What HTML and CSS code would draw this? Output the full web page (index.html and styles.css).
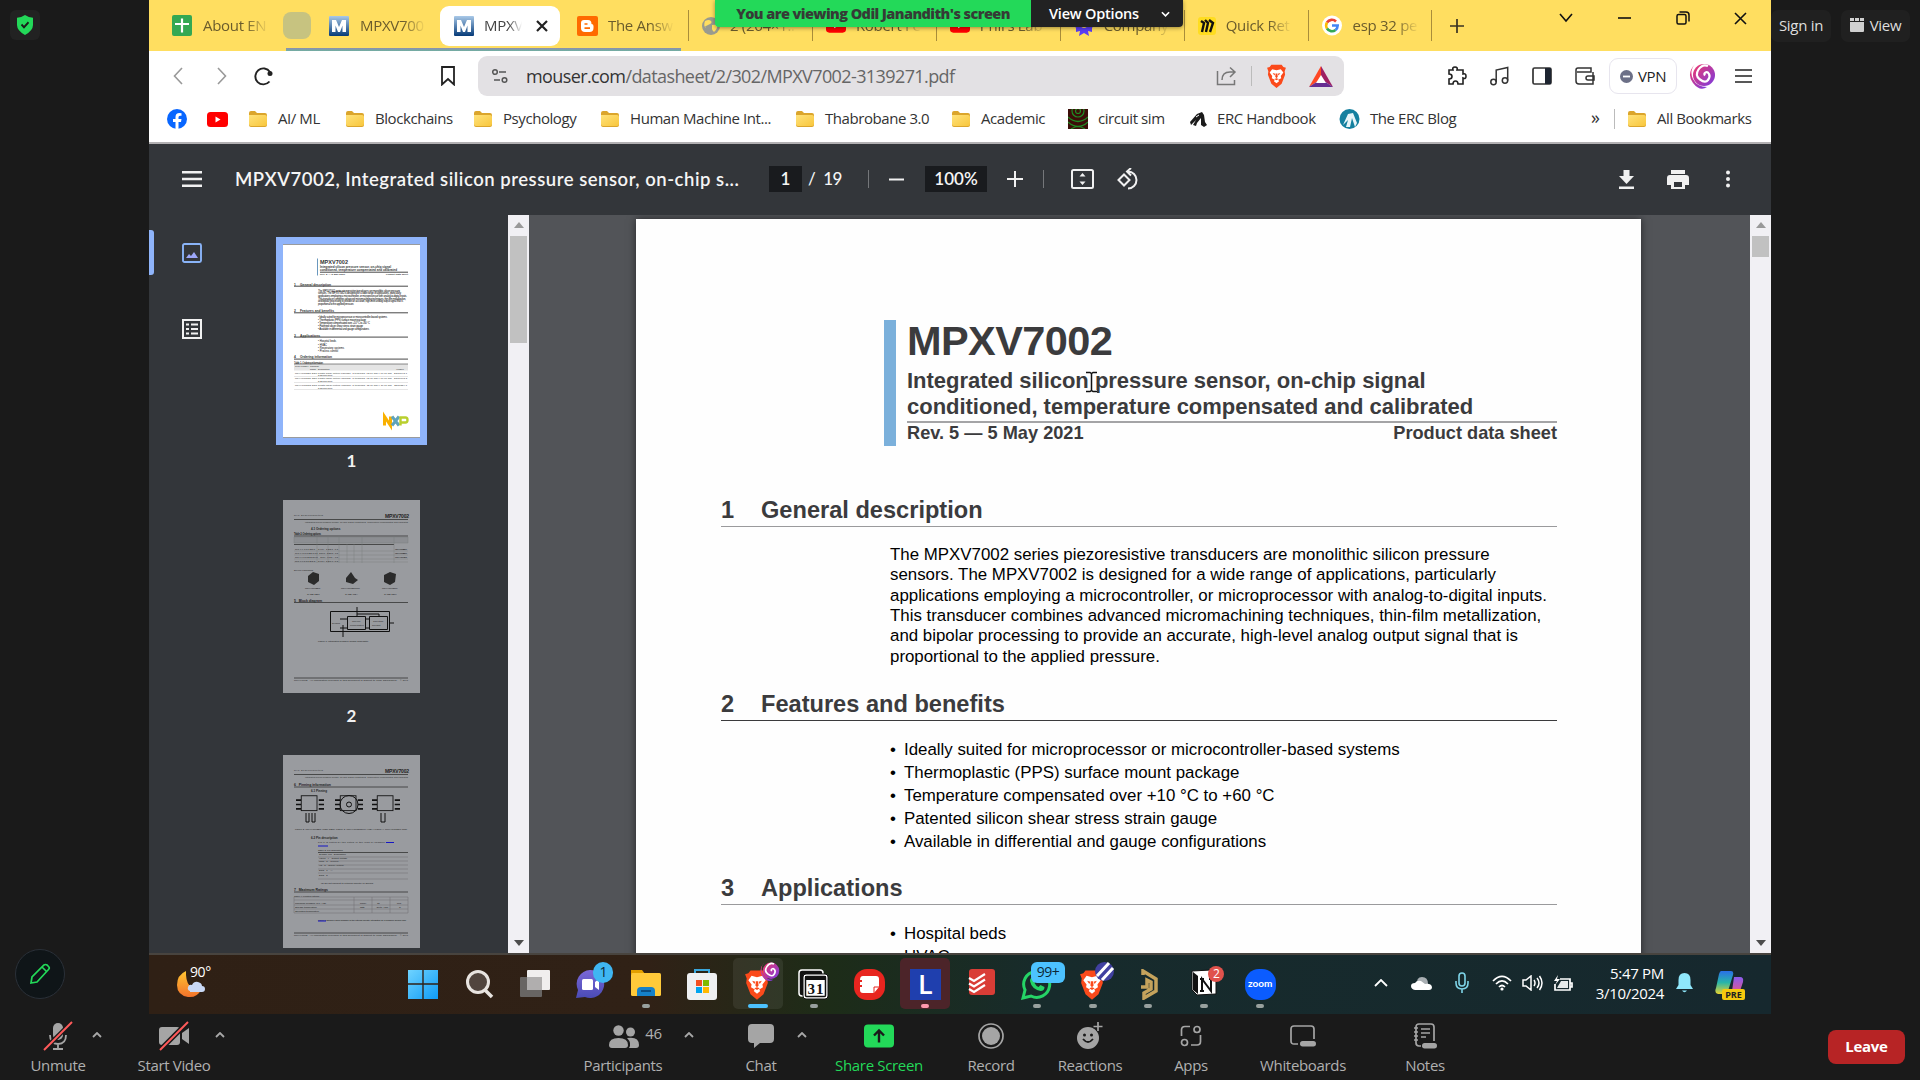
FILE: index.html
```html
<!DOCTYPE html>
<html lang="en">
<head>
<meta charset="utf-8">
<title>Screen share</title>
<link rel="stylesheet" href="styles.css">
</head>
<body>
<svg class="defs" width="0" height="0">
  <defs>
    <linearGradient id="gm" x1="0" y1="0" x2="0" y2="1"><stop offset="0" stop-color="#a9c9e8"/><stop offset="1" stop-color="#053a78"/></linearGradient>
    <linearGradient id="gf" x1="0" y1="0" x2="1" y2="1"><stop offset="0" stop-color="#ffe27a"/><stop offset="1" stop-color="#f8c63c"/></linearGradient>
    <linearGradient id="gs" x1="0" y1="0" x2="1" y2="1"><stop offset="0" stop-color="#f0386b"/><stop offset="1" stop-color="#7a3be0"/></linearGradient>
    <linearGradient id="gw" x1="0" y1="0" x2="1" y2="1"><stop offset="0" stop-color="#6fd3ff"/><stop offset="1" stop-color="#0f9bf5"/></linearGradient>
    <linearGradient id="gp" x1="0" y1="0" x2="0" y2="1"><stop offset="0" stop-color="#7b68d8"/><stop offset="1" stop-color="#4a4bb5"/></linearGradient>
    <linearGradient id="go" x1="0" y1="0" x2="0" y2="1"><stop offset="0" stop-color="#ffc531"/><stop offset="1" stop-color="#f2722b"/></linearGradient>
    <linearGradient id="gc" x1="0" y1="0" x2="0" y2="1"><stop offset="0" stop-color="#2a6fe8"/><stop offset=".5" stop-color="#28b5a8"/><stop offset="1" stop-color="#e8d32e"/></linearGradient>
    <linearGradient id="gd" x1="0" y1="0" x2="0" y2="1"><stop offset="0" stop-color="#8a5cf0"/><stop offset="1" stop-color="#f0567a"/></linearGradient>
    <symbol id="folder" viewBox="0 0 20 18"><path d="M1 3Q1 1 3 1h4l2 2h8q2 0 2 2v10q0 2-2 2H3q-2 0-2-2z" fill="#dba52c"/><path d="M1 5h16q2 0 2 2v7q0 2-2 2H3q-2 0-2-2z" fill="url(#gf)"/></symbol>
    <symbol id="mouser" viewBox="0 0 20 20"><rect width="20" height="20" rx="1" fill="url(#gm)"/><path d="M3 16V4h4l3 7 3-7h4v12h-3.500V9.500L11 16H9L6.500 9.500V16z" fill="#fff"/></symbol>
    <symbol id="yt" viewBox="0 0 21 15"><rect width="21" height="15" rx="3.500" fill="#f00"/><path d="M8.500 4.500v6l5-3z" fill="#fff"/></symbol>
    <symbol id="brave" viewBox="0 0 24 28"><path d="M6 1h12l2 2.500 3 1-1.500 4 .5 4-4 10.500L12 28l-6-5L2 12.500l.5-4L1 4.500l3-1z" fill="#fb4a1b"/><path d="M7 6l5 1.200L17 6l3 4-3 4 .5 2.500-3.500 2 1 1.500-3 2.500-3-2.500 1-1.500-3.500-2L7 14l-3-4z" fill="#fff"/><path d="M7.500 10.500l3 1-1 2zM16.500 10.500l-3 1 1 2zM11 11h2l.5 4-1.500 1.500L10.500 15zM9.500 17.500l2.500-1 2.500 1-2.500 1.500z" fill="#fb4a1b"/></symbol>
    <symbol id="swirl" viewBox="0 0 28 28"><circle cx="16" cy="13" r="11" fill="url(#gs)"/><path d="M17 13.500q-1.500-2 .5-3t3.500 1.500-1 6-8-.5-1.500-10T20 4" fill="none" stroke="#fff" stroke-width="2.200"/><path d="M7 2Q-2 12 5 21t14 4Q9 25 5 17T7 2z" fill="url(#gs)"/></symbol>
    <symbol id="caret" viewBox="0 0 10 6"><path d="M1 5l4-4 4 4" fill="none" stroke="#a8a8a8" stroke-width="1.800"/></symbol>
    <symbol id="chip" viewBox="0 0 34 32"><path d="M1 7h6M1 12h6M1 17h6M27 7h6M27 12h6M27 17h6" stroke="#111" stroke-width="1.800"/><rect x="7" y="2" width="18" height="17" fill="#999b9f" stroke="#111"/></symbol>
  </defs>
</svg>

<div class="meeting">
  <aside class="left">
    <div class="shield"><svg width="16" height="20" viewBox="0 0 16 18" preserveAspectRatio="none"><path d="M8 0q4 2.500 8 2.500V9q0 5-8 9-8-4-8-9V2.500Q4 2.500 8 0z" fill="#23d959"/><path d="M4.500 8.500L7 11l4.500-4.500" fill="none" stroke="#1a1a1a" stroke-width="1.800"/></svg></div>
    <div class="annotate"><svg width="22" height="22" viewBox="0 0 22 22"><path d="M2 20l1-6L15 2q1.500-1 3 0l1.500 1.500q1.500 1.500 0 3L8 19zM13 4l5 5" fill="none" stroke="#23d959" stroke-width="1.700"/></svg></div>
  </aside>

  <main class="share">
    <header class="tabs">
      <div class="tab"><svg width="20" height="21" viewBox="0 0 20 21"><rect width="20" height="21" rx="2" fill="#34a853"/><path d="M10 3.500v14M3 9h14" stroke="#fff" stroke-width="2.200"/></svg><span>About EN</span></div>
      <div class="group"></div>
      <div class="tab"><svg width="20" height="20"><use href="#mouser"/></svg><span>MPXV700</span></div>
      <div class="tab active"><svg width="20" height="20"><use href="#mouser"/></svg><span>MPXV</span><svg class="x" width="12" height="12" viewBox="0 0 12 12"><path d="M1 1l10 10M11 1L1 11" stroke="#222" stroke-width="2.200"/></svg></div>
      <div class="tab blog"><svg width="21" height="20" viewBox="0 0 21 20"><rect width="21" height="20" rx="2" fill="#ff6a00"/><path d="M7 4h4q3.500 0 3.500 4 2 0 2 2v2q0 4-4 4H8q-4 0-4-4V7q0-3 3-3z" fill="#fff"/><path d="M7.500 8h3M7.500 12.200h5.500" stroke="#ff6a00" stroke-width="1.700"/></svg><span>The Answ</span></div>
      <div class="tab sep"><svg width="18" height="18" viewBox="0 0 18 18"><circle cx="9" cy="9" r="9" fill="#9a9b8e"/><path d="M3 4q4-2 6 0t-3 4-2 3q-3-2-1-7zM10 8q4-1 5 1t-3 6q-2-2-2-3t0-4z" fill="#ffde60"/></svg><span>2 (264×1...</span></div>
      <div class="tab sep"><svg width="20" height="15"><use href="#yt"/></svg><span>Robert Fel</span></div>
      <div class="tab sep"><svg width="20" height="15"><use href="#yt"/></svg><span>Phil's Lab</span></div>
      <div class="tab sep"><svg width="20" height="22" viewBox="0 0 20 22"><path d="M10 1l3 2 4 0 1 4 2 3-2 3v4l-4-1 1 5-5-3-5 3 1-5-4 1v-4L0 10l2-3 1-4h4z" fill="#5b3df5"/><circle cx="10" cy="10" r="3" fill="#ffde60"/></svg><span>Company</span></div>
      <div class="tab sep"><svg width="18" height="18" viewBox="0 0 18 18"><rect width="18" height="18" rx="3" fill="#ffdd20"/><path d="M3 4l3 2-2 9M7 3l3 3-2 9M11 3l4 3-3 9" fill="none" stroke="#111" stroke-width="2.400"/></svg><span>Quick Ret</span></div>
      <div class="tab sep"><svg width="20" height="21" viewBox="0 0 20 21"><circle cx="10" cy="10.500" r="10" fill="#fff"/><g fill="none" stroke-width="2.600"><path d="M14 6.500A5.800 5.800 0 0 0 5 7.500" stroke="#ea4335"/><path d="M5 7.500a6 6 0 0 0 0 6" stroke="#fbbc05"/><path d="M5 13.500a5.800 5.800 0 0 0 8.500 1.500" stroke="#34a853"/><path d="M13.500 15a6 6 0 0 0 2.200-4.500H10" stroke="#4285f4"/></g></svg><span>esp 32 pe</span></div>
      <div class="tab sep plus"><svg width="14" height="14" viewBox="0 0 14 14"><path d="M7 0v14M0 7h14" stroke="#3a3322" stroke-width="1.700"/></svg></div>
      <div class="winctl">
        <svg width="14" height="10" viewBox="0 0 14 10"><path d="M1 1l6 7 6-7" fill="none" stroke="#111" stroke-width="1.600"/></svg>
        <svg width="13" height="10" viewBox="0 0 13 10"><path d="M0 5h13" stroke="#111" stroke-width="1.600"/></svg>
        <svg width="14" height="14" viewBox="0 0 14 14"><rect x="1" y="3.500" width="9" height="9.500" rx="1.500" fill="none" stroke="#111" stroke-width="1.500"/><path d="M3.500 1H10q3 0 3 3v6.500" fill="none" stroke="#111" stroke-width="1.500"/></svg>
        <svg width="13" height="13" viewBox="0 0 13 13"><path d="M1 1l11 11M12 1L1 12" stroke="#111" stroke-width="1.600"/></svg>
      </div>
      <i class="underline"></i>
      <div class="banner"><b>You are viewing Odil Janandith's screen</b><div>View Options<svg width="9" height="6" viewBox="0 0 10 6"><path d="M1 1l4 4 4-4" fill="none" stroke="#fff" stroke-width="1.800"/></svg></div></div>
    </header>

    <div class="nav">
      <svg width="10" height="18" viewBox="0 0 10 18"><path d="M9 1L1.500 9 9 17" fill="none" stroke="#999" stroke-width="1.600"/></svg>
      <svg width="10" height="18" viewBox="0 0 10 18"><path d="M1 1l7.500 8L1 17" fill="none" stroke="#999" stroke-width="1.600"/></svg>
      <svg width="20" height="20" viewBox="0 0 20 20"><path d="M16.500 15.500A8 8 0 1 1 17 6" fill="none" stroke="#222" stroke-width="1.900"/><circle cx="17" cy="7.500" r="2.500" fill="#222"/></svg>
      <svg width="14" height="20" viewBox="0 0 14 20"><path d="M1 1h12v17.500L7 13l-6 5.500z" fill="none" stroke="#222" stroke-width="1.800"/></svg>
      <div class="url">
        <svg width="16" height="16" viewBox="0 0 16 16"><g fill="none" stroke="#555" stroke-width="1.500"><circle cx="3" cy="4" r="2.300"/><path d="M7 4h7M2 12h6"/><circle cx="12.500" cy="12" r="2.300"/></g></svg>
        <span><b>mouser.com</b>/datasheet/2/302/MPXV7002-3139271.pdf</span>
        <svg width="21" height="20" viewBox="0 0 21 20"><path d="M1.500 5v13.500h17V14M6 14q0-8 8-8h4M14 1.500L19 6l-5 5" fill="none" stroke="#777" stroke-width="1.500"/></svg>
        <i></i>
        <svg width="21" height="24"><use href="#brave"/></svg>
        <svg width="24" height="21" viewBox="0 0 24 21"><path d="M12 0L0 21l12-8z" fill="#ff4724"/><path d="M12 0l12 21-12-8z" fill="#9e1f63"/><path d="M0 21h24l-12-8z" fill="#662d91"/><path d="M12 9l5 8H7z" fill="#fff"/></svg>
      </div>
      <div class="tools">
        <svg width="20" height="20" viewBox="0 0 20 20"><path d="M2 4h4q-1-3 2-3t2 3h6v4q3-1 3 2.200T16 12v6h-5q0-3-2.500-3T6 18H2v-5q3 0 3-2.500T2 8z" fill="none" stroke="#222" stroke-width="1.600"/></svg>
        <svg width="19" height="20" viewBox="0 0 19 20"><g fill="none" stroke="#333" stroke-width="1.500"><circle cx="3.500" cy="16" r="2.700"/><circle cx="15" cy="14.500" r="2.700"/><path d="M6.200 16V4l11.500-2.500v13"/></g></svg>
        <svg width="20" height="18" viewBox="0 0 20 18"><rect x="1" y="1" width="18" height="16" rx="1.500" fill="none" stroke="#333" stroke-width="1.700"/><path d="M13 1h6v16h-6z" fill="#1d2430"/></svg>
        <svg width="20" height="18" viewBox="0 0 20 18"><path d="M2 5h14V1H3Q1 1 1 3v11q0 3 3 3h14V5M19 9h-6q-2 0-2 2t2 2h6z" fill="none" stroke="#333" stroke-width="1.500"/></svg>
        <div class="vpn"><svg width="13" height="13" viewBox="0 0 13 13"><circle cx="6.500" cy="6.500" r="6.500" fill="#6c7087"/><path d="M3 6.500h7" stroke="#fff" stroke-width="1.800"/></svg><span>VPN</span></div>
        <svg width="28" height="28"><use href="#swirl"/></svg>
        <svg width="17" height="14" viewBox="0 0 17 14"><path d="M0 1h17M0 7h17M0 13h17" stroke="#222" stroke-width="1.700"/></svg>
      </div>
    </div>

    <div class="marks">
      <a><svg width="20" height="20" viewBox="0 0 20 20"><circle cx="10" cy="10" r="10" fill="#0866ff"/><path d="M8.500 20v-7H6v-3h2.500V8q0-4 4-4l2 .2v2.600H13q-1.500 0-1.500 1.500V10h3l-.5 3h-2.500v7z" fill="#fff"/></svg></a>
      <a><svg width="21" height="15"><use href="#yt"/></svg></a>
      <a><svg width="20" height="18"><use href="#folder"/></svg><span>AI/ ML</span></a>
      <a><svg width="20" height="18"><use href="#folder"/></svg><span>Blockchains</span></a>
      <a><svg width="20" height="18"><use href="#folder"/></svg><span>Psychology</span></a>
      <a><svg width="20" height="18"><use href="#folder"/></svg><span>Human Machine Int...</span></a>
      <a><svg width="20" height="18"><use href="#folder"/></svg><span>Thabrobane 3.0</span></a>
      <a><svg width="20" height="18"><use href="#folder"/></svg><span>Academic</span></a>
      <a><svg width="20" height="20" viewBox="0 0 20 20"><path fill="#3c0d08" d="M0 0h20v20H0z"/><g fill="none" stroke="#1f8c24" stroke-width="1.200"><circle cx="10" cy="2" r="2.500"/><circle cx="10" cy="2" r="6"/><path d="M0 8q10 9 20 0M0 13q10 9 20 0M3 20q7-5 14 0"/></g></svg><span>circuit sim</span></a>
      <a><svg width="18" height="17" viewBox="0 0 18 17"><path d="M1 11L8 3l5-2 2 3 1 7 2 3-3 2-3-2V7l-4 5-1 3-3-1 3-5-5 5z" fill="#1b1b1b"/><path d="M7 6l3-2" stroke="#fff"/></svg><span>ERC Handbook</span></a>
      <a><svg width="21" height="20" viewBox="0 0 21 20"><circle cx="10.500" cy="10" r="10" fill="#14809f"/><path d="M4 16l5-11 5-1 4 10-2 4-3-9-2 9-4 0 2-7z" fill="#e8f5f8"/></svg><span>The ERC Blog</span></a>
      <em>»</em><i></i>
      <a><svg width="20" height="18"><use href="#folder"/></svg><span>All Bookmarks</span></a>
    </div>

    <div class="pdfbar">
      <svg width="20" height="16" viewBox="0 0 20 16"><path d="M0 1.200h20M0 8h20M0 14.800h20" stroke="#f1f1f1" stroke-width="2.400"/></svg>
      <strong>MPXV7002, Integrated silicon pressure sensor, on-chip s...</strong>
      <span class="box pg">1</span><span class="total">/&nbsp; 19</span><i></i>
      <svg width="15" height="15" viewBox="0 0 15 15"><path d="M0 7.500h15" stroke="#f1f1f1" stroke-width="2"/></svg>
      <span class="box zm">100%</span>
      <svg width="16" height="16" viewBox="0 0 16 16"><path d="M0 8h16M8 0v16" stroke="#f1f1f1" stroke-width="2"/></svg><i></i>
      <svg width="23" height="20" viewBox="0 0 23 20"><rect x="1" y="1" width="21" height="18" rx="1.500" fill="none" stroke="#f1f1f1" stroke-width="2"/><path d="M8.500 7.500l3-3.500 3 3.500zM8.500 12.500l3 3.500 3-3.500z" fill="#f1f1f1"/></svg>
      <svg width="22" height="22" viewBox="0 0 22 22"><path d="M1.500 12L7 6.500l5.500 5.500L7 17.500zM11 3.500a8.500 8.500 0 1 1 0 17M14 0l-4 3.500 4 4" fill="none" stroke="#f1f1f1" stroke-width="2"/></svg>
      <div class="actions">
        <svg width="15" height="19" viewBox="0 0 15 19"><path d="M4.500 0h6v6H15l-7.500 8L0 6h4.500zM0 16.500h15V19H0z" fill="#f1f1f1"/></svg>
        <svg width="22" height="19" viewBox="0 0 22 19"><path d="M4 0h14v4H4zM3 5h16q3 0 3 3v7h-4v4H4v-4H0V8q0-3 3-3zm4 7v5h8v-5z" fill="#f1f1f1"/></svg>
        <svg width="4" height="18" viewBox="0 0 4 18"><g fill="#f1f1f1"><circle cx="2" cy="2.500" r="2"/><circle cx="2" cy="9" r="2"/><circle cx="2" cy="15.500" r="2"/></g></svg>
      </div>
    </div>

    <div class="viewer">
      <div class="rail">
        <svg width="20" height="20" viewBox="0 0 20 20"><rect x="1" y="1" width="18" height="18" rx="1.500" fill="none" stroke="#8ab4f8" stroke-width="1.900"/><path d="M4 15l3-4 2 2 3-4 4 6z" fill="#9da7fa"/></svg>
        <svg width="20" height="20" viewBox="0 0 20 20"><path d="M1 1h18v18H1z" fill="none" stroke="#f1f1f1" stroke-width="2"/><path d="M4 5.500h3M9 5.500h7M4 10h3M9 10h7M4 14.500h3M9 14.500h7" stroke="#f1f1f1" stroke-width="2.200"/></svg>
      </div>
      <div class="thumbs">
        <div class="thumb sel"><svg width="137" height="194" viewBox="0 0 137 193">
          <path fill="#fff" d="M0 0h137v193H0z"/><path d="M34.500 14v17" stroke="#6a98bd"/>
          <g font-weight="700" fill="#333"><text x="37" y="19" font-size="5.500" textLength="28">MPXV7002</text><text x="37" y="23.500" font-size="3" textLength="71">Integrated silicon pressure sensor, on-chip signal</text><text x="37" y="26.800" font-size="3" textLength="77">conditioned, temperature compensated and calibrated</text><text x="37" y="30.500" font-size="2.400" textLength="25">Rev. 5 — 5 May 2021</text><text x="103" y="30.500" font-size="2.400" textLength="22">Product data sheet</text>
          <g font-size="3.300"><text x="11" y="41">1</text><text x="17" y="41" textLength="31">General description</text><text x="11" y="67">2</text><text x="17" y="67" textLength="34">Features and benefits</text><text x="11" y="92">3</text><text x="17" y="92" textLength="20">Applications</text><text x="11" y="113.500">4</text><text x="17" y="113.500" textLength="32">Ordering information</text></g></g>
          <path d="M37 27.700h88M11 41.700h114M11 68.300h114M11 92.600h114M11 114.600h114M11 119.700h114" stroke="#333" stroke-width=".9"/>
          <g font-size="2.700" fill="#000"><text x="35" y="47.200" textLength="82">The MPXV7002 series piezoresistive transducers are monolithic silicon pressure</text><text x="35" y="49.800" textLength="83">sensors. The MPXV7002 is designed for a wide range of applications, particularly</text><text x="35" y="52.500" textLength="89">applications employing a microcontroller, or microprocessor with analog-to-digital inputs.</text><text x="35" y="55.200" textLength="88">This transducer combines advanced micromachining techniques, thin-film metallization,</text><text x="35" y="57.800" textLength="85">and bipolar processing to provide an accurate, high-level analog output signal that is</text><text x="35" y="60.500" textLength="36">proportional to the applied pressure.</text>
          <text x="35" y="73" textLength="69">• Ideally suited for microprocessor or microcontroller-based systems</text><text x="35" y="76" textLength="48">• Thermoplastic (PPS) surface mount package</text><text x="35" y="79" textLength="52">• Temperature compensated over +10 °C to +60 °C</text><text x="35" y="82" textLength="45">• Patented silicon shear stress strain gauge</text><text x="35" y="85" textLength="51">• Available in differential and gauge configurations</text><text x="35" y="97.500">• Hospital beds</text><text x="35" y="101">• HVAC</text><text x="35" y="104.200">• Respiratory systems</text><text x="35" y="107">• Process control</text><text x="11" y="119" textLength="29">Table 1. Ordering information</text></g>
          <path fill="#e4e4e4" d="M11 120h114v6H11z"/><path d="M11 132h114M11 138h114M11 145h114" stroke="#ccc" stroke-width=".5"/>
          <g font-size="2.300" fill="#222"><text x="12" y="122.500">Type number</text><text x="27" y="122.500">Package</text><text x="27" y="125.500">Name &#160; Description</text><text x="113" y="125.500">Version</text><text x="12" y="129" textLength="112">MPXV7002DP SOT Plastic small outline package, 8 terminals, 12.06 mm x 10.67 mm &#160; SOT1693-1</text><text x="35" y="131.500">3.38 mm body</text><text x="12" y="134.800" textLength="112">MPXV7002GP SOT Plastic small outline package, 8 terminals, 12.06 mm x 10.67 mm &#160; SOT1693-3</text><text x="35" y="137.300">3.38 mm body</text><text x="12" y="141.300" textLength="112">MPXV7002GC SOT Plastic small outline package, 8 terminals, 12.06 mm x 10.67 mm &#160; SOT1854-1</text><text x="35" y="144">3.38 mm body</text></g>
          <path d="M101.500 181v-9l6 9v-9" fill="none" stroke="#f9b000" stroke-width="3"/><path d="M109 172l7 9M116 172l-7 9" stroke="#5fa3bb" stroke-width="3"/><path d="M117.500 181v-8h5q2 0 2 2.500t-2 2.500h-5" fill="none" stroke="#b9cf2e" stroke-width="2.400"/>
        </svg></div>
        <b>1</b>
        <div class="thumb"><svg width="137" height="193" viewBox="0 0 137 193">
          <path fill="#999b9f" d="M0 0h137v193H0z"/>
          <g fill="#222"><text x="11" y="16" font-size="2.300" textLength="29">NXP Semiconductors</text><text x="102" y="18" font-size="5" font-weight="700" textLength="24">MPXV7002</text><text x="22" y="22.500" font-size="2" textLength="103">Integrated silicon pressure sensor, on-chip signal conditioned, temperature compensated and calibrated</text><text x="28" y="30" font-size="3" font-weight="700">4.1 Ordering options</text><text x="11" y="35" font-size="2.600" font-weight="700" textLength="27">Table 2. Ordering options</text><text x="11" y="71" font-size="2.500">Device packages</text><text x="11" y="102" font-size="3.500" font-weight="700" textLength="28">5 &#160; Block diagram</text></g>
          <path d="M11 19.500h114M11 36h114M11 44.500h100M11 102.500h114M11 178h114" stroke="#333" stroke-width=".8"/>
          <path d="M11 37h114v6H11zM11 51h114M11 55h114M11 59h114M11 62h114M34 36v27M45 36v27M56 36v27M64 44v19M71 44v19M79 36v27M111 36v27" fill="#8c8e92" stroke="#77797c" stroke-width=".4"/>
          <g font-size="2.400" fill="#111"><text x="12" y="49.500" textLength="43">MPXV7002DP &#160;Tray 1351-01</text><text x="12" y="53.500" textLength="43">MPXV7002DPT1 Tape 1351-01</text><text x="12" y="58" textLength="43">MPXV7002GC6U &#160;Rail 482A-01</text><text x="12" y="61.500" textLength="43">MPXV7002GP &#160;Tray 1369-01</text><text x="112" y="49.500" textLength="12">MPXV7002DP</text><text x="112" y="53.500" textLength="12">MPXV7002DP</text><text x="112" y="58" textLength="12">MPXV7002G</text><text x="22" y="89">MPXV7002DP</text><text x="58" y="89">MPXV7002GC6U</text><text x="99" y="89">MPXV7002GP</text><text x="24" y="95">CASE 1351</text><text x="62" y="95">CASE 482A</text><text x="101" y="95">CASE 1369</text><text x="35" y="141.500">Figure 1. Integrated pressure sensor schematic</text><text x="11" y="180.500" textLength="114">MPXV7002 &#160; All information provided in this document is subject to legal disclaimers. &#160; © NXP</text></g>
          <path d="M25 76l5-4 6 2v7l-5 4-6-3zM63 78l5-6 4 6 3 2-5 4-7-2zM101 75l6-3 6 2-1 8-5 3-6-3z" fill="#2b2b2b"/>
          <g fill="none" stroke="#111"><path d="M47.500 111.500h59v20h-59zM74 107v9M74 114h22v3M57 119h8M57 128h8M60 125v12M107 123h4"/><path d="M64.500 116.500h18v13h-18zM86.500 116.500h18v13h-18zM83 119h4M83 128h4"/></g>
          <g font-size="2.200" fill="#222"><text x="69" y="122">Thin film</text><text x="67" y="126">compensation</text><text x="90" y="122">Gain stage</text><text x="89" y="126">and shift</text><text x="49" y="124">Sensing</text></g>
        </svg></div>
        <b>2</b>
        <div class="thumb"><svg width="137" height="193" viewBox="0 0 137 193">
          <path fill="#999b9f" d="M0 0h137v193H0z"/>
          <g fill="#222"><text x="11" y="16" font-size="2.300" textLength="29">NXP Semiconductors</text><text x="102" y="18" font-size="5" font-weight="700" textLength="24">MPXV7002</text><text x="22" y="22.500" font-size="2" textLength="103">Integrated silicon pressure sensor, on-chip signal conditioned, temperature compensated and calibrated</text><text x="11" y="30.500" font-size="3.500" font-weight="700" textLength="37">6 &#160; Pinning information</text><text x="28" y="37" font-size="3" font-weight="700">6.1 Pinning</text><text x="28" y="84" font-size="3" font-weight="700">6.2 Pin description</text><text x="11" y="136" font-size="3.500" font-weight="700" textLength="34">7 &#160; Maximum Ratings</text></g>
          <path d="M11 19.500h114M11 32h114M11 137h114M35 97.500h90M11 178h114" stroke="#333" stroke-width=".8"/>
          <use href="#chip" x="12" y="39" width="30" height="28"/><use href="#chip" x="51" y="39" width="30" height="28"/><use href="#chip" x="88" y="39" width="30" height="28"/>
          <g fill="none" stroke="#111"><circle cx="66" cy="49.500" r="9"/><circle cx="66" cy="49.500" r="2.500"/><path d="M23 58v9h3v-9M29 58v9h3v-9M98 58v9h4v-9"/></g>
          <g font-size="2.400" fill="#111"><text x="12" y="75" textLength="112">Figure 2. MPXV7002DP (case 1351) Figure 3. MPXV7002GC6U (482A) Figure 4. MPXV7002GP case</text><text x="35" y="88" textLength="67">Pin 1 is noted by the notch in the lead or chamfer</text><text x="35" y="96">Table 3. Pin description</text><text x="36" y="100">Symbol &#160;Pin &#160; Description</text><text x="36" y="104">VOUT &#160; 4 &#160; &#160;Output voltage</text><text x="36" y="107">GND &#160; 3 &#160; &#160;Ground</text><text x="36" y="111">VS &#160; 2 &#160; &#160;Supply voltage</text><text x="36" y="116">DNC &#160; 1 &#160; &#160;—</text><text x="36" y="121">DNC &#160; 5</text><text x="38" y="129" textLength="52">[1] Do not connect to external circuitry or ground</text><text x="11" y="141.500">Table 4. Limiting ratings</text><text x="12" y="149">Maximum pressure (P1 &gt; P2)</text><text x="12" y="153">Storage temperature</text><text x="12" y="157">Operating temperature</text><text x="77" y="149">Pmax</text><text x="94" y="149">75</text><text x="114" y="149">kPa</text><text x="77" y="153">Tstg</text><text x="93" y="153">-30 to +100</text><text x="115" y="153">°C</text><text x="35" y="165.500" textLength="88">Figure 5 shows a block diagram of the internal circuitry integrated on a pressure sensor chip</text><text x="11" y="180.500" textLength="114">MPXV7002 &#160; All information provided in this document is subject to legal disclaimers. &#160; © NXP</text></g>
          <path d="M35 102h90M35 106h90M35 110h90M35 114h90M35 118h90M35 124h90M11 142h114v16H11zM71 142v16M89 142v16M107 142v16M11 145h114M11 150h114M11 154h114" fill="none" stroke="#6c6e72" stroke-width=".5"/>
          <path d="M103 87.500h8M35 91h10M35 166h8" stroke="#1616c4" stroke-width="1.200"/>
        </svg></div>
      </div>
      <div class="sbar a"><i class="up"></i><u></u><i class="dn"></i></div>
      <div class="canvas">
        <article class="page">
          <div class="title">
            <h1>MPXV7002</h1>
            <h2>Integrated silicon pressure sensor, on-chip signal</h2>
            <h2 class="t2">conditioned, temperature compensated and calibrated</h2>
            <div class="rev"><span>Rev. 5 — 5 May 2021</span><span>Product data sheet</span></div>
          </div>
          <h3 class="s1"><span>1</span>General description</h3>
          <p>The MPXV7002 series piezoresistive transducers are monolithic silicon pressure<br>sensors. The MPXV7002 is designed for a wide range of applications, particularly<br>applications employing a microcontroller, or microprocessor with analog-to-digital inputs.<br>This transducer combines advanced micromachining techniques, thin-film metallization,<br>and bipolar processing to provide an accurate, high-level analog output signal that is<br>proportional to the applied pressure.</p>
          <h3 class="s2"><span>2</span>Features and benefits</h3>
          <ul><li>Ideally suited for microprocessor or microcontroller-based systems</li><li>Thermoplastic (PPS) surface mount package</li><li>Temperature compensated over +10 °C to +60 °C</li><li>Patented silicon shear stress strain gauge</li><li>Available in differential and gauge configurations</li></ul>
          <h3 class="s3"><span>3</span>Applications</h3>
          <ul><li>Hospital beds</li><li>HVAC</li></ul>
        </article>
        <svg class="cursor" width="13" height="22" viewBox="0 0 13 22"><path d="M1 1.500h4l1.500 1L8 1.500h4M1 20.500h4l1.500-1 1.500 1h4M6.500 2v18" fill="none" stroke="#fff" stroke-width="3"/><path d="M1 1.500h4l1.500 1L8 1.500h4M1 20.500h4l1.500-1 1.500 1h4M6.500 2v18" fill="none" stroke="#111" stroke-width="1.500"/></svg>
      </div>
      <div class="sbar b"><i class="up"></i><u></u><i class="dn"></i></div>
    </div>

    <footer class="taskbar">
      <div class="weather"><svg width="30" height="28" viewBox="0 0 30 28"><path d="M9 1Q0 5 0 15t11 12q9 1 13-7Q8 20 9 1z" fill="url(#go)"/><path d="M13 21q-3-1-2-4t4-2q2-4 6-3t4 4q3 0 3 3t-3 3H13z" fill="#c9d8f5"/></svg><span>90°</span></div>
      <div class="apps">
        <div><svg width="30" height="30" viewBox="0 0 30 30"><path d="M0 1h14.300v13.300H0zM15.700 1H30v13.300H15.700zM0 15.700h14.300V30H0zM15.700 15.700H30V30H15.700z" fill="url(#gw)"/></svg></div>
        <div><svg width="30" height="30" viewBox="0 0 30 30"><circle cx="14" cy="13" r="10.500" fill="#51453e" stroke="#e8e4e0" stroke-width="3"/><path d="M21 21l7 7" stroke="#e8e4e0" stroke-width="3.500"/></svg></div>
        <div><svg width="30" height="30" viewBox="0 0 30 30"><rect x="7" y="1" width="23" height="20" rx="1" fill="#f0eeee"/><rect y="8" width="22" height="20" rx="1" fill="#777" fill-opacity=".8"/><path d="M7 8h15v13H7z" fill="#b0aeae"/></svg></div>
        <div><svg width="30" height="30" viewBox="0 0 30 30"><path d="M15 1a14 14 0 1 1-5 27l-9 1 2-8A14 14 0 0 1 15 1z" fill="url(#gp)"/><rect x="7" y="10" width="11" height="11" rx="1.500" fill="#fff"/><path d="M20 13l4-3v11l-4-3z" fill="#fff"/></svg><em class="one">1</em></div>
        <div class="run"><svg width="32" height="28" viewBox="0 0 32 28"><path d="M1 1h11l3 4H1z" fill="#e3a000"/><rect x="1" y="4" width="30" height="23" rx="1.500" fill="#ffca3a"/><path d="M7 27v-5q0-4 4-4h10q4 0 4 4v5z" fill="#1581c9"/><path d="M11 22h10" stroke="#0b4f85" stroke-width="2"/></svg></div>
        <div><svg width="30" height="31" viewBox="0 0 30 31"><path d="M8 6V1h14v5" fill="none" stroke="#3aa7dc" stroke-width="2"/><rect y="4" width="30" height="27" rx="3" fill="#eef0f2"/><path d="M9 11h6v6H9z" fill="#f25022"/><path d="M16 11h6v6h-6z" fill="#7fba00"/><path d="M9 18h6v6H9z" fill="#00a4ef"/><path d="M16 18h6v6h-6z" fill="#ffb900"/></svg></div>
        <div class="cur"><svg width="26" height="31"><use href="#brave"/></svg><svg class="ov" width="21" height="21"><use href="#swirl"/></svg></div>
        <div class="run"><svg width="31" height="31" viewBox="0 0 31 31"><rect x="1" y="1" width="24" height="26" rx="3" fill="#111" stroke="#fff" stroke-width="1.500"/><rect x="5" y="5" width="25" height="25" rx="3" fill="#fff" stroke="#111"/><rect x="7.500" y="7.500" width="20" height="20" rx="1" fill="none" stroke="#111" stroke-width="1.500"/><path d="M7 7h21v4H7z" fill="#111"/><text x="9.500" y="25" font-size="15" font-weight="700" font-family="Liberation Serif" fill="#111" textLength="16">31</text></svg></div>
        <div><svg width="31" height="31" viewBox="0 0 31 31"><rect width="31" height="31" rx="13" fill="#e8251f"/><path d="M9 7h13q3 0 3 3v8l-5 6H9q-3 0-3-3v-3h2v-2H6v-3h2v-2H6q0-4 3-4z" fill="#fff"/><path d="M20 24v-6h5" fill="none" stroke="#e8251f"/></svg></div>
        <div class="run lap"><span>L</span></div>
        <div><svg width="27" height="26" viewBox="0 0 27 26"><rect x="1" width="26" height="26" rx="3" fill="#d93d36"/><path d="M1 9l5 3 11-7M1 14.500l5 3 11-7M1 20l5 3 11-7" fill="none" stroke="#fff" stroke-width="2.200"/></svg></div>
        <div class="run"><svg width="31" height="31" viewBox="0 0 31 31"><path d="M2 29l2-8A13 13 0 1 1 10 27z" fill="none" stroke="#25d366" stroke-width="3"/><path d="M10 9l3-1 2 4-1.500 2q1.500 3 4 4l2-2 4 2q0 4-4 4-9-2-10.500-10 0-2 1-3z" fill="#25d366"/></svg><em class="many">99+</em></div>
        <div class="run"><svg class="b2" width="26" height="31"><use href="#brave"/></svg><svg class="ov" width="21" height="21" viewBox="0 0 21 21"><circle cx="10.500" cy="10.500" r="9.500" fill="#4040a0"/><path d="M3 15L15 2M8 19L19 7" stroke="#fff" stroke-width="3"/></svg></div>
        <div class="run"><svg width="20" height="31" viewBox="0 0 20 31"><path d="M5 6V2l13 8v12L6 29v-5l7-4v-7l-4-2v7H3" fill="none" stroke="#c5a35c" stroke-width="3.500"/></svg></div>
        <div class="run"><svg width="26" height="27" viewBox="0 0 26 27"><path d="M1 2l19-1 5 4v20l-19 1-5-5z" fill="#fff" stroke="#111"/><path d="M2 3l5 4v18l-5-4z" fill="#111"/><path d="M11 22V10l9 12V10M9 10h4M18 10h4M9 22h4" fill="none" stroke="#111" stroke-width="2"/></svg><em class="two">2</em></div>
        <div class="run"><span class="zoom">zoom</span></div>
      </div>
      <div class="tray">
        <svg width="14" height="8" viewBox="0 0 14 8"><path d="M1 7l6-6 6 6" fill="none" stroke="#fff" stroke-width="1.800"/></svg>
        <svg width="21" height="14" viewBox="0 0 21 14"><path d="M6 9Q5 1 11 1t6 7z" fill="#a9afb3"/><path d="M4 14q-4-1-4-4t4-3q2-3 6-2l4 3q6-1 7 3 0 3-3 3z" fill="#fff"/></svg>
        <svg width="14" height="22" viewBox="0 0 14 22"><path d="M7 1q3 0 3 3v7q0 3-3 3t-3-3V4q0-3 3-3zM1 9v2q0 6 6 6t6-6V9M7 17v4" fill="none" stroke="#7ed4e8" stroke-width="1.600"/></svg>
        <svg width="20" height="16" viewBox="0 0 20 16"><g fill="none" stroke="#fff" stroke-width="1.700"><path d="M1 6q9-9 18 0M4 9q6-6 12 0M7 12q3-3 6 0"/></g><circle cx="10" cy="14" r="1.600" fill="#fff"/></svg>
        <svg width="21" height="16" viewBox="0 0 21 16"><path d="M1 5h3l5-4v14l-5-4H1zM12 5q2 3 0 6M15 3q4 5 0 10M17.500 1q5 7 0 14" fill="none" stroke="#fff" stroke-width="1.500"/></svg>
        <svg width="20" height="17" viewBox="0 0 20 17"><path d="M7 4h10v11H2V9M17 8h2v4h-2" fill="none" stroke="#fff" stroke-width="1.700"/><path d="M8 6h7v7H4z" fill="#e6eaea"/><path d="M5 0L1 6h3L2 10l5-6H4z" fill="#fff"/></svg>
        <div class="clock"><span>5:47 PM</span><span>3/10/2024</span></div>
        <svg width="17" height="20" viewBox="0 0 17 20"><path d="M8.500 0q6 0 6 7v5l2.500 4H0l2.500-4V7q0-7 6-7zM6 17.500h5q-2.500 3.500-5 0z" fill="#8fe7fb"/></svg>
        <div class="copilot"><svg width="30" height="27" viewBox="0 0 30 27"><path d="M6 1h10q3 0 2 4l-5 16q-1 3-5 3H3q-4-1-2-6L4 4q1-3 2-3z" fill="url(#gc)"/><path d="M19 7h6q4 0 3 5l-3 9q-1 4-5 4h-7q3 0 4-4z" fill="url(#gd)"/></svg><em>PRE</em></div>
      </div>
    </footer>
  </main>

  <aside class="right"><span>Sign in</span><span><svg width="14" height="14" viewBox="0 0 14 14"><path d="M0 0h4v3H0zM5 0h4v3H5zM10 0h4v3h-4zM0 4h14v9q0 1-1 1H1q-1 0-1-1z" fill="#d0d0d0"/></svg>View</span></aside>
</div>

<div class="controls">
  <div class="c mute"><svg width="30" height="30" viewBox="0 0 30 30"><rect x="10" y="2" width="10" height="17" rx="5" fill="#a5a5a5"/><path d="M7 14q0 9 8 9t8-9M15 23v5M10 28h10" fill="none" stroke="#a5a5a5" stroke-width="1.800"/><path d="M1 29L29 1" stroke="#1a1a1a" stroke-width="4.500"/><path d="M1 29L29 1" stroke="#ff5a5a" stroke-width="2"/></svg><span>Unmute</span></div>
  <div class="c video"><svg width="32" height="30" viewBox="0 0 32 30"><rect x="1" y="6" width="21" height="18" rx="3" fill="#a5a5a5"/><path d="M24 12l7-5v16l-7-5z" fill="#a5a5a5"/><path d="M2 29L30 1" stroke="#1a1a1a" stroke-width="5"/><path d="M2 29L30 1" stroke="#ff5a5a" stroke-width="2"/></svg><span>Start Video</span></div>
  <div class="c people"><div><svg width="30" height="23" viewBox="0 0 30 23"><g fill="#a5a5a5"><circle cx="9.500" cy="5.500" r="5.200"/><circle cx="21.500" cy="7" r="4.500"/><path d="M0 20q0-7 9.500-7t9.500 7q0 3-3 3H3q-3 0-3-3zM18 13q12-2 12 7 0 3-3 3h-7q3-5-2-10z"/></g></svg><small>46</small></div><span>Participants</span></div>
  <div class="c chat"><svg width="26" height="24" viewBox="0 0 26 24"><path d="M4 0h18q4 0 4 4v11q0 4-4 4H12l-6 5v-5H4q-4 0-4-4V4q0-4 4-4z" fill="#a5a5a5"/></svg><span>Chat</span></div>
  <div class="c ss"><svg width="30" height="23" viewBox="0 0 30 23"><rect width="30" height="23" rx="4" fill="#23d959"/><path d="M15 18V6M10 11l5-5 5 5" fill="none" stroke="#1a1a1a" stroke-width="2.400"/></svg><span>Share Screen</span></div>
  <div class="c rec"><svg width="26" height="26" viewBox="0 0 26 26"><circle cx="13" cy="13" r="12" fill="none" stroke="#a5a5a5" stroke-width="1.700"/><circle cx="13" cy="13" r="9" fill="#a5a5a5"/></svg><span>Record</span></div>
  <div class="c rea"><svg width="28" height="28" viewBox="0 0 28 28"><circle cx="12" cy="16" r="11" fill="#a5a5a5"/><path d="M22 0v9M17.500 4.500h9" stroke="#1a1a1a" stroke-width="4"/><path d="M22 0v9M17.500 4.500h9" stroke="#a5a5a5" stroke-width="1.700"/><g fill="#1a1a1a"><circle cx="8.500" cy="13" r="1.500"/><circle cx="15.500" cy="13" r="1.500"/></g><path d="M7 17q5 6 10 0" fill="none" stroke="#1a1a1a" stroke-width="1.800"/></svg><span>Reactions</span></div>
  <div class="c app"><svg width="22" height="22" viewBox="0 0 22 22"><g fill="none" stroke="#a5a5a5" stroke-width="1.700"><path d="M1.500 11V5q0-3.500 3.500-3.500h5M20.500 10v6.500q0 3.500-3.500 3.500h-6"/><circle cx="17" cy="4.500" r="3"/><circle cx="4.500" cy="17.500" r="3"/></g></svg><span>Apps</span></div>
  <div class="c wb"><svg width="26" height="22" viewBox="0 0 26 22"><path d="M8 19H4q-3 0-3-3V4q0-3 3-3h17q3 0 3 3v10" fill="none" stroke="#a5a5a5" stroke-width="1.700"/><rect x="10" y="16" width="16" height="5.500" rx="2.700" fill="#a5a5a5"/></svg><span>Whiteboards</span></div>
  <div class="c notes"><svg width="24" height="26" viewBox="0 0 24 26"><path d="M8 23H6q-3 0-3-3V4q0-3 3-3h12q3 0 3 3v14" fill="none" stroke="#a5a5a5" stroke-width="1.700"/><path d="M1 5h4M1 9h4M1 13h4M1 17h4M8 6h9M8 10h9M8 14h5" stroke="#a5a5a5" stroke-width="1.500"/><rect x="9" y="20" width="15" height="5.500" rx="2.700" fill="#a5a5a5"/></svg><span>Notes</span></div>
  <svg class="k k1" width="10" height="6"><use href="#caret"/></svg><svg class="k k2" width="10" height="6"><use href="#caret"/></svg><svg class="k k3" width="10" height="6"><use href="#caret"/></svg><svg class="k k4" width="10" height="6"><use href="#caret"/></svg>
  <button>Leave</button>
</div>
</body>
</html>
```
FILE: styles.css
```css
* { box-sizing: border-box; }
html, body { margin: 0; width: 1920px; height: 1080px; overflow: hidden; background: #1a1a1a; }
body { font-family: "Open Sans", "Noto Sans", sans-serif; font-size: 15px; line-height: 20px; color: #222; }
svg { display: block; flex: none; }
em, i, u { font-style: normal; text-decoration: none; }
.defs { position: absolute; }
span, a, b, strong, em { white-space: nowrap; }

.meeting { display: grid; grid-template-columns: 149px 1622px 149px; height: 1014px; }
.left { display: flex; flex-direction: column; justify-content: space-between; padding: 10px 10px 15px; }
.shield { width: 30px; height: 30px; border-radius: 6px; background: #222; display: grid; place-items: center; }
.annotate { width: 50px; height: 50px; margin-left: 5px; border-radius: 50%; background: #0f1518; border: 1px solid #2a3038; display: grid; place-items: center; }
.right { display: flex; align-items: flex-start; gap: 10px; padding-top: 10px; color: #dedede; }
.right span { height: 32px; width: 60px; padding-bottom: 2px; border-radius: 7px; background: #202020; display: flex; align-items: center; justify-content: center; gap: 6px; letter-spacing: -.3px; }
.right span + span { width: 69px; }

.share { display: grid; grid-template-rows: 51px 50px 43px 71px 738px 61px; background: #fff; overflow: hidden; min-width: 0; }

/* tab strip */
.tabs { position: relative; display: flex; align-items: center; background: #ffde60; padding-left: 23px; }
.tab { display: flex; align-items: center; gap: 11px; width: 111px; flex: none; height: 40px; color: #6b5c2c; }
.tab span { width: 66px; margin-top: -2px; overflow: hidden; letter-spacing: -.3px; -webkit-mask-image: linear-gradient(90deg, #000 65%, transparent); mask-image: linear-gradient(90deg, #000 65%, transparent); }
.group { width: 28px; height: 27px; border-radius: 8px; background: #c7c380; margin-right: 18px; flex: none; }
.tab.active { width: 120px; background: #fff; border-radius: 9px; padding-left: 14px; gap: 10px; }
.tab.active span { width: 38px; color: #444; }
.tab.active .x { margin-left: 4px; }
.tab.blog { margin-left: 17px; gap: 10px; }
.tab.sep { width: 124px; height: 31px; border-left: 1px solid #a98d3a; padding-left: 13px; gap: 10px; margin-right: -.1px; }
.tab.sep:nth-child(11) span { margin-left: 1px; }
.tab.plus { width: 110px; padding-left: 18px; }
.winctl { display: flex; align-items: center; width: 206px; justify-content: space-between; height: 16px; align-self: flex-start; margin-top: 10px; margin-left: 18px; padding-right: 18px; flex: none; }
.underline { position: absolute; left: 137px; top: 48px; width: 395px; height: 3px; background: linear-gradient(#8f8eb0, #6fb0a0); }
.banner { position: absolute; left: 566px; top: 0; width: 468px; height: 27px; display: flex; font-weight: 700; font-size: 14.500px; box-shadow: 0 1px 4px #0006; border-radius: 0 0 4px 4px; overflow: hidden; }
.banner b { width: 316px; background: #23d959; color: #353b36; line-height: 27px; text-align: center; letter-spacing: -.57px; }
.banner div { flex: 1; background: #222; color: #fff; font-weight: 600; display: flex; align-items: center; justify-content: space-between; padding: 0 13px 0 18px; letter-spacing: -.2px; }

/* navigation */
.nav { display: flex; align-items: center; padding: 0 20px 0 24px; }
.nav > svg:nth-child(2) { margin-left: 34px; }
.nav > svg:nth-child(3) { margin-left: 26px; }
.nav > svg:nth-child(4) { margin-left: 168px; }
.url { width: 866px; height: 40px; margin-left: 23px; border-radius: 9px; background: #e3e1e4; display: flex; align-items: center; padding: 0 11px 0 14px; color: #666; font-size: 18px; }
.url span { margin-left: 18px; flex: 1; letter-spacing: -.6px; }
.url b { font-weight: 400; color: #333; }
.url i { width: 1px; height: 20px; background: #bbb; margin: 0 14px; }
.url svg:last-child { margin-left: 22px; }
.tools { flex: 1; display: flex; align-items: center; justify-content: space-between; margin-left: 103px; }
.tools > svg:nth-child(4) { margin-right: -9px; }
.tools > .vpn + svg { margin-left: -12px; margin-right: -4px; }
.vpn { width: 68px; height: 36px; border: 1.500px solid #e7e5ee; border-radius: 9px; display: flex; align-items: center; justify-content: center; gap: 5px; letter-spacing: -.4px; }
.vpn span { margin-top: -1px; }

.marks { display: flex; align-items: flex-start; height: 43px; padding: 8px 19px 0 18px; border-bottom: 2px solid #b2b0b2; color: #333; letter-spacing: -.43px; }
.marks a { display: flex; align-items: center; gap: 10px; height: 20px; flex: none; width: 98px; }
.marks span { margin-top: -2px; }
.marks a:nth-child(1) { width: 40px; }
.marks a:nth-child(2) { width: 41px; }
.marks a:nth-child(3) { width: 97px; }
.marks a:nth-child(4) { width: 128px; }
.marks a:nth-child(5) { width: 127px; }
.marks a:nth-child(6) { width: 195px; }
.marks a:nth-child(7) { width: 156px; }
.marks a:nth-child(8) { width: 117px; }
.marks a:nth-child(9) { width: 121px; }
.marks a:nth-child(10) { width: 150px; }
.marks a:nth-child(11) { width: 252px; }
.marks em { width: 23px; font-size: 18px; line-height: 17px; }
.marks i { width: 13px; border-left: 1px solid #bbb; height: 20px; }
.marks a:last-child { width: 126px; }

/* document toolbar */
.pdfbar { display: flex; align-items: center; background: #33363a; color: #f5f5f5; padding: 0 42px 1px 33px; font-family: Lato, sans-serif; }
.pdfbar strong { width: 509px; margin: -1px 25px 0 33px; font-size: 18.500px; font-weight: 600; letter-spacing: .52px; }
.pdfbar .box { background: #191b1e; height: 26px; line-height: 26px; text-align: center; font-weight: 600; font-size: 17px; }
.pdfbar .pg { width: 33px; }
.pdfbar .zm { width: 62px; margin: 0 20px 0 21px; }
.pdfbar .total { width: 60px; padding-left: 6px; font-size: 17px; font-weight: 500; margin: -1px 6px 0 0; letter-spacing: -.4px; }
.pdfbar > i { width: 1px; height: 18px; background: #75777a; margin-right: 20px; }
.pdfbar > i + svg + svg { margin-left: 23px; }
.pdfbar > svg + i { margin: 0 27px 0 20px; }
.actions { display: flex; align-items: center; gap: 32.500px; margin-left: auto; }
.actions svg:last-child { margin-left: 5px; }

.viewer { display: grid; grid-template-columns: 67px 292px 21px 1221px 21px; background: #33363a; overflow: hidden; }
.rail { position: relative; padding: 28px 0 0 33px; display: flex; flex-direction: column; gap: 56px; }
.rail::before { content: ""; position: absolute; left: 0; top: 15px; width: 5px; height: 45px; border-radius: 0 3px 3px 0; background: #8fb4fa; }
.thumbs { display: flex; flex-direction: column; align-items: center; padding-top: 22px; margin-right: 21px; color: #f1f1f1; font-family: Lato, sans-serif; font-size: 17px; }
.thumb svg { font-family: "Liberation Sans", sans-serif; }
.thumb.sel { border: 7px solid #8fb4fa; }
.thumbs b { height: 55px; line-height: 32px; flex: none; }
.thumbs b:nth-of-type(2) { height: 62px; line-height: 46px; }
.sbar { background: #f1f0f4; display: flex; flex-direction: column; align-items: center; padding: 7px 0 7px; }
.sbar i { border: 5px solid transparent; height: 0; width: 0; }
.sbar .up { border-top: 0; border-bottom-color: #999; border-bottom-width: 6px; }
.sbar .dn { border-bottom: 0; border-top-color: #4d4d4d; border-top-width: 6px; margin-top: auto; }
.sbar u { width: 17px; background: #c1c1c1; margin-top: 8px; height: 107px; }
.sbar.b u { height: 21px; }
.canvas { position: relative; background: #525458; padding: 4px 109px 0 107px; overflow: hidden; }
.page { width: 1005px; height: 900px; background: #fefefe; box-shadow: 0 0 8px #0008; padding: 101px 84px 0 85px; font-family: "Liberation Sans", Arial, sans-serif; color: #000; }
.title { margin-left: 163px; border-left: 12px solid #7bb0db; padding-left: 11px; height: 126px; color: #3b3b3d; font-weight: 700; }
h1, h2, h3, p, ul { margin: 0; }
h1 { font-size: 41.500px; line-height: 42px; letter-spacing: -.6px; }
h2 { font-size: 22px; line-height: 26px; padding-top: 6px; letter-spacing: -.02px; white-space: nowrap; }
h2.t2 { padding-top: 0; height: 29px; border-bottom: 2px solid #a4a4a6; }
.rev { display: flex; justify-content: space-between; font-size: 18.200px; line-height: 20px; }
h3 { display: flex; font-size: 23.600px; line-height: 30px; height: 32px; color: #3b3b3d; border-bottom: 1.500px solid #9a9a9c; }
h3 span { width: 40px; }
.s1 { margin-top: 49px; }
.s2 { margin-top: 22px; border-color: #3b3b3d; }
.s3 { margin-top: 20px; }
.page p { margin: 18px 0 0 169px; font-size: 16.880px; line-height: 20.350px; white-space: nowrap; }
.page ul { list-style: none; padding: 0; margin: 17px 0 0 169px; font-size: 16.880px; line-height: 23px; }
.page li { display: flex; }
.page li::before { content: "•"; width: 14px; }
.cursor { position: absolute; left: 556px; top: 156px; }

/* taskbar */
.taskbar { display: grid; grid-template-columns: 246px 893px 483px; border-top: 2px solid #48443f; background: linear-gradient(90deg, #2f2015 0, #302116 500px, #1d2c18 680px, #172b2c 900px, #16282e 100%); color: #fff; }
.weather { position: relative; padding: 15px 0 0 28px; }
.weather span { position: absolute; left: 41px; top: 7px; font-size: 14px; letter-spacing: -.4px; }
.apps { display: grid; grid-template-columns: repeat(16, 1fr); }
.apps > div { position: relative; display: flex; justify-content: center; align-items: flex-start; padding-top: 14px; }
.run::after, .cur::after { content: ""; position: absolute; top: 49px; left: calc(50% - 4px); width: 8px; height: 4px; border-radius: 2px; background: #98a09e; }
.cur::after { width: 20px; left: calc(50% - 10px); background: #4cc2ff; }
.cur::before, .lap::before { content: ""; position: absolute; inset: 3px 3px 5px; border-radius: 5px; background: #ffffff12; }
.lap::before { background: #4c2429; }
.lap::after { background: #ff98ad; }
.apps svg, .apps span { position: relative; }
.apps .ov { position: absolute; left: 29px; top: 6px; }
.cur > svg:first-child, .b2 { margin-right: 1px; }
.lap span { width: 31px; height: 31px; background: #1f3fae; font-size: 27px; line-height: 30px; font-weight: 600; text-align: center; }
.zoom { width: 31px; height: 31px; border-radius: 14px; background: #0b5cff; font: 700 10px/29px Lato, sans-serif; text-align: center; }
.apps em { position: absolute; left: 31px; top: 7px; height: 21px; border-radius: 11px; width: 20px; text-align: center; background: #3fb6f2; color: #0d2836; line-height: 20px; font-size: 14px; }
.apps .many { left: 22px; width: 34px; border-radius: 6px; background: #4cc2ff; letter-spacing: -.5px; }
.apps .two { left: 32px; top: 11px; width: 16px; height: 16px; line-height: 16px; font-size: 12px; background: #e0524c; color: #fff; }
.tray { display: flex; align-items: center; padding: 0 25px 3px 86px; }
.tray > svg:nth-child(2) { margin-left: 23px; }
.tray > svg:nth-child(3) { margin-left: 23px; }
.tray > svg:nth-child(4) { margin-left: 23px; }
.tray > svg:nth-child(5) { margin-left: 10px; }
.tray > svg:nth-child(6) { margin-left: 10px; }
.clock { display: flex; flex-direction: column; align-items: flex-end; width: 91px; letter-spacing: -.3px; }
.clock span { margin-top: -1px; }
.clock span + span { margin-top: 0; }
.clock + svg { margin-left: 12px; }
.copilot { position: relative; margin-left: 22px; }
.copilot em { position: absolute; left: 7px; top: 19px; width: 23px; height: 11px; border-radius: 2px; background: #f6c90e; color: #222; font-size: 9px; line-height: 11px; font-weight: 700; text-align: center; }

/* meeting controls */
.controls { position: relative; height: 66px; color: #b0b0b0; display: flex; }
.c { flex: none; display: flex; flex-direction: column; align-items: center; height: 62px; letter-spacing: -.33px; width: 120px; }
.c > :first-child { height: 30px; margin-top: 7px; margin-bottom: 4px; }
.mute { margin-left: -2px; }
.video { margin-left: -4px; }
.people { margin-left: 329px; }
.people > div { display: flex; align-items: center; gap: 6px; margin-left: 25px; }
.people small { font-size: 15px; margin-top: -7px; }
.chat { margin-left: 18px; }
.ss { margin-left: -2px; color: #23d959; }
.rec { margin-left: -8px; }
.rea { margin-left: -21px; }
.app { margin-left: -19px; }
.wb { margin-left: -8px; }
.notes { margin-left: 2px; }
.k { position: absolute; top: 18px; }
.k1 { left: 92px; }
.k2 { left: 215px; }
.k3 { left: 684px; }
.k4 { left: 797px; }
.controls button { margin: 16px 15px 0 auto; padding: 0 0 2px; width: 77px; height: 34px; border: 0; border-radius: 8px; background: #b72425; color: #fff; font: 700 15px "Open Sans", sans-serif; letter-spacing: -.3px; }
```
